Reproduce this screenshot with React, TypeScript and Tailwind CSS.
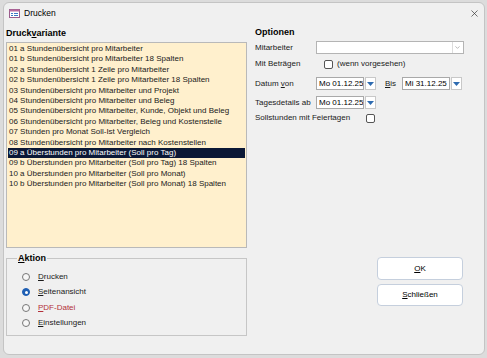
import { ChevronDown, X } from "lucide-react";

const variants = [
  "01 a Stundenübersicht pro Mitarbeiter",
  "01 b Stundenübersicht pro Mitarbeiter 18 Spalten",
  "02 a Stundenübersicht 1 Zeile pro Mitarbeiter",
  "02 b Stundenübersicht 1 Zeile pro Mitarbeiter 18 Spalten",
  "03 Stundenübersicht pro Mitarbeiter und Projekt",
  "04 Stundenübersicht pro Mitarbeiter und Beleg",
  "05 Stundenübersicht pro Mitarbeiter, Kunde, Objekt und Beleg",
  "06 Stundenübersicht pro Mitarbeiter, Beleg und Kostenstelle",
  "07 Stunden pro Monat Soll-Ist Vergleich",
  "08 Stundenübersicht pro Mitarbeiter nach Kostenstellen",
  "09 a Überstunden pro Mitarbeiter (Soll pro Tag)",
  "09 b Überstunden pro Mitarbeiter (Soll pro Tag) 18 Spalten",
  "10 a Überstunden pro Mitarbeiter (Soll pro Monat)",
  "10 b Überstunden pro Mitarbeiter (Soll pro Monat) 18 Spalten",
];

const actions = [
  { key: "D", rest: "rucken", checked: false, red: false },
  { key: "S", rest: "eitenansicht", checked: true, red: false },
  { key: "P", rest: "DF-Datei", checked: false, red: true },
  { key: "E", rest: "instellungen", checked: false, red: false },
];

function DateField({ value }: { value: string }) {
  return (
    <div className="flex items-center gap-[1px]">
      <div className="w-[48px] h-[13px] bg-white border border-[#a9a9a9] flex items-center pl-[2px] text-[8px] text-black whitespace-nowrap overflow-hidden">{value}</div>
      <div className="w-[11px] h-[13px] bg-white border border-[#c8c8c8] flex items-center justify-center">
        <svg width="7" height="4" viewBox="0 0 7 4"><path d="M0 0h7L3.5 4z" fill="#2e6bb0" /></svg>
      </div>
    </div>
  );
}

function Check({ className = "" }: { className?: string }) {
  return <div className={`w-[9px] h-[9px] rounded-[2px] border border-[#555] bg-white ${className}`} />;
}

export default function App() {
  return (
    <div className="w-[487px] h-[358px] bg-[#dcdcdc] pt-[2px] pl-[3px] overflow-hidden" style={{ fontFamily: '"Liberation Sans", Arial, sans-serif' }}>
      <div className="w-[482px] h-[353px] bg-[#f0f0f0] border border-[#c4c4c4] rounded-[6px] flex flex-col text-[8px] text-[#1a1a1a]">
        <div className="h-[21px] flex items-center pl-[5px] pr-[4px]">
          <svg width="11" height="9" viewBox="0 0 11 9" className="mr-[4px]">
            <rect x="0.5" y="0.5" width="10" height="8" fill="#fff" stroke="#9a5c8c" />
            <rect x="0.5" y="0.5" width="10" height="2" fill="#b76b9e" />
            <rect x="2" y="4" width="2" height="1" fill="#3b78c4" />
            <rect x="5" y="4" width="4" height="1" fill="#3b78c4" />
            <rect x="2" y="6" width="2" height="1" fill="#3b78c4" />
            <rect x="5" y="6" width="4" height="1" fill="#3b78c4" />
          </svg>
          <span className="text-[8.5px] text-black">Drucken</span>
          <X className="ml-auto w-[11px] h-[11px] text-[#333]" strokeWidth={1.5} />
        </div>

        <div className="flex flex-1 pl-[2px]">
          <div className="w-[241px] flex flex-col">
            <div className="h-[18px] pt-[4px] font-bold text-[9px] text-black leading-[10px]">
              Druck<span className="underline">v</span>ariante
            </div>
            <div className="h-[206px] bg-[#fff0cd] border border-[#b9b9b9] pt-[1px] px-[1px]">
              {variants.map((v, i) => (
                <div key={v} className={`h-[10.4px] leading-[10.4px] pl-[1px] whitespace-nowrap ${i === 10 ? "bg-[#0b1836] text-white" : "text-[#1a1a1a]"}`}>
                  {v}
                </div>
              ))}
            </div>
            <fieldset className="mt-[5px] border border-[#c6c6c6] h-[83px] px-[6px] pt-[6px]">
              <legend className="ml-[4px] px-[1px] font-bold text-[9px] text-black leading-[10px]">
                <span className="underline">A</span>ktion
              </legend>
              <div className="flex flex-col">
                {actions.map((a) => (
                  <div key={a.key} className="h-[15.5px] flex items-center">
                    <div className={`w-[8px] h-[8px] rounded-full border ml-[9px] flex items-center justify-center ${a.checked ? "border-[#1f5fb4] bg-[#1f5fb4]" : "border-[#777] bg-[#f7f7f7]"}`}>
                      {a.checked && <div className="w-[3px] h-[3px] rounded-full bg-white" />}
                    </div>
                    <span className={`ml-[8px] ${a.red ? "text-[#b3303a]" : "text-[#1a1a1a]"}`}>
                      <span className="underline">{a.key}</span>{a.rest}
                    </span>
                  </div>
                ))}
              </div>
            </fieldset>
          </div>

          <div className="ml-[8px] w-[211px] flex flex-col">
            <div className="h-[17px] pt-[3px] font-bold text-[9px] text-black leading-[10px]">Optionen</div>
            <div className="flex items-center h-[13px]">
              <span className="w-[61px]">Mitarbeiter</span>
              <div className="w-[148px] h-[13px] bg-white border border-[#b4b4b4] flex items-center justify-end pr-[1px]">
                <div className="h-[11px] w-[10px] border-l border-[#dcdcdc] flex items-center justify-center">
                  <ChevronDown className="w-[7px] h-[7px] text-[#888]" strokeWidth={2} />
                </div>
              </div>
            </div>
            <div className="flex items-center h-[14px] mt-[3px]">
              <span className="w-[69px]">Mit Beträgen</span>
              <Check />
              <span className="ml-[4px]">(wenn vorgesehen)</span>
            </div>
            <div className="flex items-center h-[13px] mt-[6px]">
              <span className="w-[61px]">Datum <span className="underline">v</span>on</span>
              <DateField value="Mo 01.12.25" />
              <span className="ml-[9px] w-[17px]"><span className="underline">B</span>is</span>
              <DateField value="Mi 31.12.25" />
            </div>
            <div className="flex items-center h-[13px] mt-[6px]">
              <span className="w-[61px]">Tagesdetails ab</span>
              <DateField value="Mo 01.12.25" />
            </div>
            <div className="flex items-center h-[14px] mt-[2px]">
              <span className="w-[111px]">Sollstunden mit Feiertagen</span>
              <Check />
            </div>

            <div className="mt-[132px] ml-[122px] flex flex-col gap-[4px]">
              <button className="w-[86px] h-[23px] bg-white border border-[#c5cfdd] rounded-[4px] text-[8px] text-black">
                <span className="underline">O</span>K
              </button>
              <button className="w-[86px] h-[22px] bg-white border border-[#c5cfdd] rounded-[4px] text-[8px] text-black">
                <span className="underline">S</span>chließen
              </button>
            </div>
          </div>
        </div>
      </div>
    </div>
  );
}
